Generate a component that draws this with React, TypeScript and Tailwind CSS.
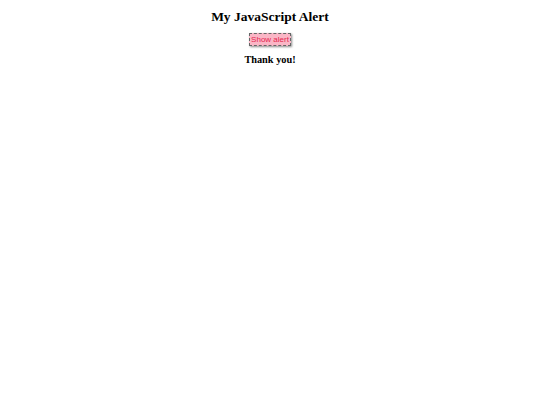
export default function App() {
  return (
    <div className="w-[540px] h-[405px] bg-white flex flex-col items-center font-['Liberation_Serif',serif]">
      <h1 className="mt-[9px] text-[13.5px] leading-[16px] font-bold text-black">My JavaScript Alert</h1>
      <button className="mt-[8px] h-[13px] px-[1.5px] bg-[#fab6c6] border border-dashed border-[#666] shadow-[1px_1px_2px_rgba(0,0,0,0.45)] text-[#e4264f] text-[8px] leading-[11px] font-['Liberation_Sans',sans-serif]">Show alert</button>
      <h3 className="mt-[7px] text-[10.3px] leading-[13px] font-bold text-black">Thank you!</h3>
    </div>
  );
}
